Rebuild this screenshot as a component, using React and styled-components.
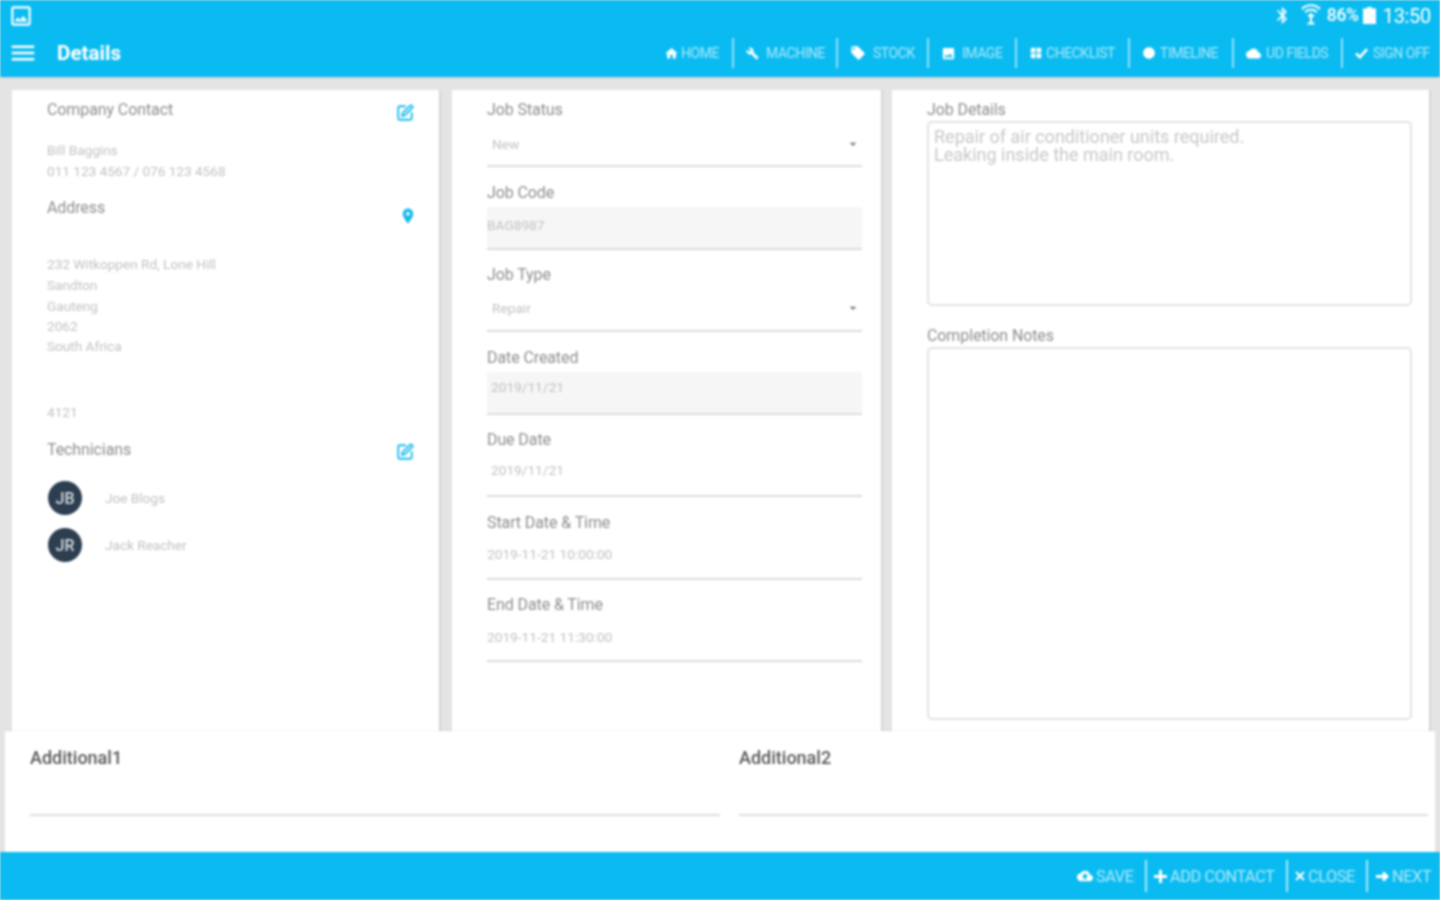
import React from "react";
import styled, { createGlobalStyle } from "styled-components";
import { MdHome, MdLocalOffer, MdCloud, MdCloudUpload, MdBluetooth, MdOutlinePhoto, MdLocationOn, MdMenu, MdImage, MdWindow, MdLens, MdBuild, MdArrowDropDown } from "react-icons/md";
import { SquarePen } from "lucide-react";

const Global = createGlobalStyle`
  html, body { margin: 0; padding: 0; background: #e4e4e4; }
  body { font-family: Roboto, "Liberation Sans", sans-serif; overflow: hidden; }
`;

const Page = styled.div`
  width: 1440px; height: 900px; display: flex; flex-direction: column; overflow: hidden;
  background: #e4e4e4; filter: blur(0.8px);
`;
const Header = styled.header`
  height: 77px; flex: none; background: #0abbf1; color: #fff; display: flex; flex-direction: column;
  box-shadow: 0 1px 2px rgba(0,0,0,.12);
`;
const StatusBar = styled.div`
  height: 29px; flex: none; box-sizing: border-box; display: flex; align-items: center; padding: 2px 9px 0 8px; gap: 4px;
`;
const StatusSpacer = styled.div`flex: 1;`;
const StatusText = styled.span`
  font-size: ${p => p.$size}px; line-height: 27px; letter-spacing: -0.3px; font-weight: ${p => p.$weight || 400};
  margin: ${p => p.$mt || 0}px 0 0 ${p => p.$ml || 0}px;
`;
const BluetoothIcon = styled(MdBluetooth)`
  margin-right: 5px;
`;
const WifiIcon = styled.svg`
  margin-right: 2px; margin-top: -3px;
`;
const Toolbar = styled.div`
  flex: 1; display: flex; align-items: center; padding: 0 9px 0 8px;
`;
const Title = styled.h1`
  margin: 0 0 0 19px; font-size: 20.6px; font-weight: 700; line-height: 48px;
`;
const Nav = styled.nav`
  margin-left: auto; display: flex; align-items: center; height: 30px;
`;
const NavItem = styled.div`
  display: flex; align-items: center; height: 30px; box-sizing: border-box; width: ${p => p.$w}px; padding-left: 12px;
  border-right: ${p => p.$last ? "none" : "2px solid rgba(255,255,255,.55)"};
  font-size: 14px; letter-spacing: -0.45px; color: rgba(255,255,255,.66); gap: ${p => p.$gap}px; white-space: nowrap;
  svg { color: #fff; flex: none; }
`;
const Main = styled.main`
  flex: 1; min-height: 0; display: grid; grid-template-columns: 440px 440px 537px;
  padding: 13px 0 0 12px; overflow: hidden;
`;
const Card = styled.section`
  background: #fff; padding: 10px ${p => p.$pr}px 0 35px; box-shadow: 2px 0 0 #d4d4d4; min-height: 0;
  margin-right: ${p => p.$mr || 0}px;
`;
const Label = styled.div`
  font-size: 16px; line-height: 20px; color: #8e8e8e; letter-spacing: -0.1px;
`;
const HeadRow = styled.div`
  display: flex; justify-content: space-between; align-items: flex-start;
  margin-top: ${p => p.$mt || 0}px; height: 20px;
`;
const EditIcon = styled(SquarePen)`
  color: #16b9ef; margin: ${p => p.$mt}px 0 0 0; flex: none;
`;
const PinIcon = styled(MdLocationOn)`
  color: #16b9ef; margin: 9px -3px 0 0; flex: none;
`;
const Small = styled.div`
  font-size: 13.7px; line-height: 20px; color: #c2c2c2; letter-spacing: -0.05px;
  margin-top: ${p => p.$mt || 0}px;
`;
const TechRow = styled.div`
  display: flex; align-items: center; height: 34px; margin: ${p => p.$mt}px 0 0 1px; gap: 23px;
`;
const Avatar = styled.div`
  width: 34px; height: 34px; border-radius: 50%; background: #2c3e50; color: #d6dade;
  display: flex; align-items: center; justify-content: center; font-size: 16px; font-weight: 500;
`;
const Field = styled.div`
  margin-bottom: 15.5px;
`;
const Control = styled.div`
  height: 43px; margin-top: 4px; display: flex; align-items: center; box-sizing: border-box;
  border-bottom: 2px solid #dcdcdc; padding: 0 0 ${p => p.$pb}px ${p => p.$pl}px;
  background: ${p => p.$disabled ? "#f6f6f6" : "transparent"};
  font-size: 13.7px; color: #c2c2c2;
`;
const Arrow = styled(MdArrowDropDown)`
  margin-left: auto; margin-right: 1px; color: #777; flex: none;
`;
const TextBox = styled.div`
  height: ${p => p.$h}px; box-sizing: border-box; margin: 1px 0 ${p => p.$mb || 0}px 0; padding: 5px;
  border: 2px solid #e3e3e3; border-radius: 5px; font-size: 18px; line-height: 18px; color: #c8c8c8;
`;
const Additional = styled.section`
  flex: none; height: 121px; margin: 0 5px; background: #fff; display: grid;
  grid-template-columns: 690px 689px; column-gap: 19px; padding: 17px 0 0 25px; box-sizing: border-box;
  position: relative; box-shadow: 0 -1px 1px rgba(0,0,0,.03);
`;
const AddLabel = styled.div`
  font-size: 18px; line-height: 20px; color: #5a5a5a; font-weight: 500;
`;
const AddLine = styled.div`
  height: 2px; margin-top: 46px; background: #dedede;
`;
const Footer = styled.footer`
  height: 48px; flex: none; background: #0abbf1; display: flex; justify-content: flex-end; align-items: center;
  padding-right: 9px; position: relative;
`;
const FootItem = styled.div`
  display: flex; align-items: center; height: 32px; box-sizing: border-box; width: ${p => p.$w}px; padding-left: ${p => p.$pl}px;
  border-right: ${p => p.$last ? "none" : "2px solid rgba(255,255,255,.65)"};
  font-size: 16.3px; letter-spacing: -0.4px; color: rgba(255,255,255,.68); white-space: nowrap; gap: 3px;
  svg { color: #fff; flex: none; }
`;

const Wifi = () => (
  <WifiIcon width="20" height="22" viewBox="0 0 20 22" fill="none" stroke="#fff" strokeWidth="2">
    <path d="M1 6 C6 1 14 1 19 6" />
    <path d="M4 9 C7.5 6 12.5 6 16 9" />
    <path d="M7 12 L10 14 L13 12" />
    <path d="M10 10 V20 M6.5 20.5 H13.5" />
  </WifiIcon>
);
const Battery = () => (
  <svg width="13" height="17" viewBox="0 0 13 17">
    <path fill="#fff" d="M4 0 H9 V1.5 H13 V17 H0 V1.5 H4 Z" />
  </svg>
);
const Stroke = ({ w, h, d, sw }) => (
  <svg width={w} height={h} viewBox={`0 0 ${w} ${h}`} fill="none" stroke="currentColor" strokeWidth={sw}>
    <path d={d} />
  </svg>
);
const CheckGlyph = () => <Stroke w={13} h={11} sw={2.6} d="M1 5.5 L5 9.2 L12 1.2" />;
const PlusGlyph = () => <Stroke w={13} h={13} sw={3} d="M6.5 0 V13 M0 6.5 H13" />;
const CloseGlyph = () => <Stroke w={10} h={10} sw={2} d="M1 1 L9 9 M9 1 L1 9" />;
const ArrowGlyph = () => <Stroke w={13} h={11} sw={3} d="M0 5.5 H10 M7 1.5 L11 5.5 L7 9.5" />;
const SaveGlyph = () => <MdCloudUpload size={16} />;

const navItems = [
  [<MdHome size={15} />, "HOME", 2, 82],
  [<MdBuild size={13} />, "MACHINE", 7, 104],
  [<MdLocalOffer size={16} />, "STOCK", 7, 91],
  [<MdImage size={15} />, "IMAGE", 6, 88],
  [<MdWindow size={14} />, "CHECKLIST", 3, 113],
  [<MdLens size={14} />, "TIMELINE", 4, 104],
  [<MdCloud size={15} />, "UD FIELDS", 5, 109],
  [<CheckGlyph />, "SIGN OFF", 5, 88],
];
const footItems = [
  [<SaveGlyph />, "SAVE", 12, 82],
  [<PlusGlyph />, "ADD CONTACT", 7, 141],
  [<CloseGlyph />, "CLOSE", 7, 80],
  [<ArrowGlyph />, "NEXT", 8, 63],
];
const jobFields = [
  ["Job Status", "New", 5, false, true, 2],
  ["Job Code", "BAG8987", 0, true, false, 4],
  ["Job Type", "Repair", 5, false, true, 4],
  ["Date Created", "2019/11/21", 4, true, false, 10],
  ["Due Date", "2019/11/21", 4, false, false, 10],
  ["Start Date & Time", "2019-11-21 10:00:00", 0, false, false, 6],
  ["End Date & Time", "2019-11-21 11:30:00", 0, false, false, 6],
];

export default function App() {
  return (
    <Page>
      <Global />
      <Header>
        <StatusBar>
          <MdOutlinePhoto size={26} />
          <StatusSpacer />
          <BluetoothIcon size={19} />
          <Wifi />
          <StatusText $size={17.5} $weight={500}>86%</StatusText>
          <Battery />
          <StatusText $size={20} $ml={3} $mt={2}>13:50</StatusText>
        </StatusBar>
        <Toolbar>
          <MdMenu size={30} />
          <Title>Details</Title>
          <Nav>
            {navItems.map(([icon, text, gap, w], i) => (
              <NavItem key={text} $gap={gap} $w={w} $last={i === navItems.length - 1}>
                {icon}
                {text}
              </NavItem>
            ))}
          </Nav>
        </Toolbar>
      </Header>
      <Main>
        <Card $pr={25} $mr={13}>
          <HeadRow>
            <Label>Company Contact</Label>
            <EditIcon size={18} $mt={4} strokeWidth={2.4} />
          </HeadRow>
          <Small $mt={20}>Bill Baggins</Small>
          <Small $mt={1}>011 123 4567 / 076 123 4568</Small>
          <HeadRow $mt={17}>
            <Label>Address</Label>
            <PinIcon size={18} />
          </HeadRow>
          <Small $mt={36}>232 Witkoppen Rd, Lone Hill</Small>
          <Small $mt={1}>Sandton</Small>
          <Small $mt={1}>Gauteng</Small>
          <Small>2062</Small>
          <Small>South Africa</Small>
          <Small $mt={46}>4121</Small>
          <HeadRow $mt={18}>
            <Label>Technicians</Label>
            <EditIcon size={18} $mt={3} strokeWidth={2.4} />
          </HeadRow>
          <TechRow $mt={21}><Avatar>JB</Avatar><Small>Joe Blogs</Small></TechRow>
          <TechRow $mt={13}><Avatar>JR</Avatar><Small>Jack Reacher</Small></TechRow>
        </Card>
        <Card $pr={19} $mr={11}>
          {jobFields.map(([label, value, pl, disabled, select, pb]) => (
            <Field key={label}>
              <Label>{label}</Label>
              <Control $pl={pl} $pb={pb} $disabled={disabled}>
                {value}
                {select && <Arrow size={16} />}
              </Control>
            </Field>
          ))}
        </Card>
        <Card $pr={17}>
          <Label>Job Details</Label>
          <TextBox $h={185} $mb={20}>
            Repair of air conditioner units required.<br />Leaking inside the main room.
          </TextBox>
          <Label>Completion Notes</Label>
          <TextBox $h={373} />
        </Card>
      </Main>
      <Additional>
        <div><AddLabel>Additional1</AddLabel><AddLine /></div>
        <div><AddLabel>Additional2</AddLabel><AddLine /></div>
      </Additional>
      <Footer>
        {footItems.map(([icon, text, pl, w], i) => (
          <FootItem key={text} $pl={pl} $w={w} $last={i === footItems.length - 1}>
            {icon}
            {text}
          </FootItem>
        ))}
      </Footer>
    </Page>
  );
}
